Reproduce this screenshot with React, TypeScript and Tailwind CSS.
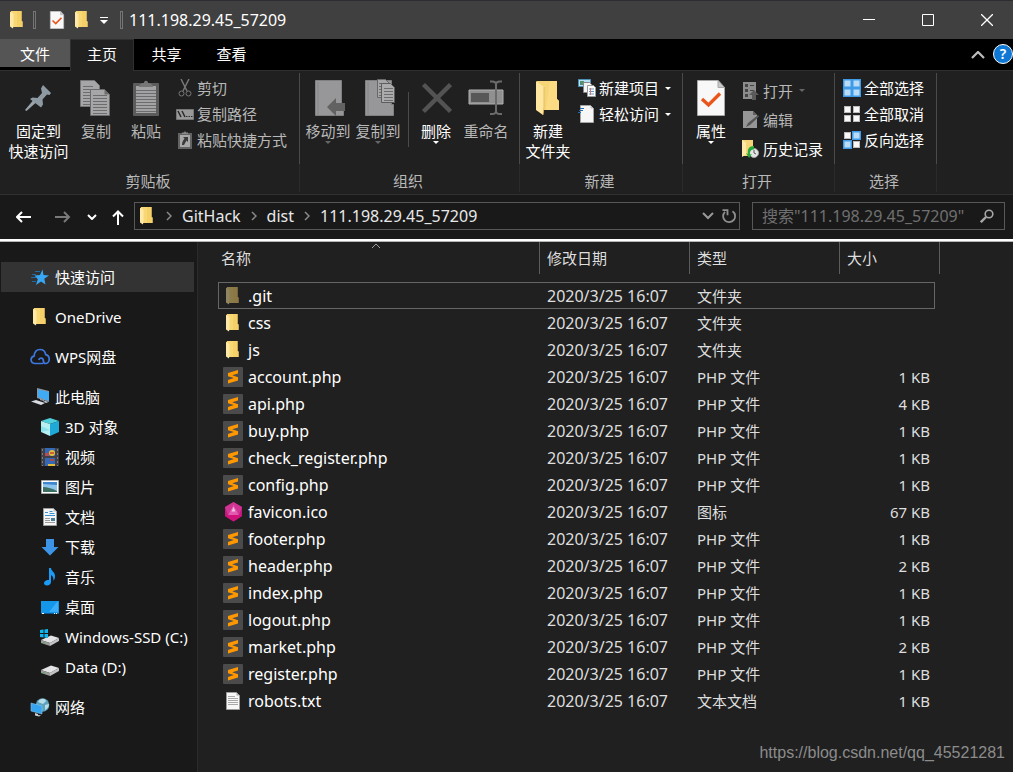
import type { ReactNode } from "react";

type IconProps = { className?: string };

/* ---------- icons ---------- */

function FolderIcon({ className = "" }: IconProps) {
  return (
    <svg width="13" height="18" viewBox="0 0 13 18" className={className}>
      <path d="M1 0h10.500v10l1 .500v5.500H1z" fill="#f8d775" />
      <path d="M7 0h4.500v10l1 .500v5.500H7z" fill="#f5cf68" />
      <path d="M0 .500l3.500 2.500v10.500l-.500 4L0 15.500z" fill="#ffe9a6" />
    </svg>
  );
}

function BigFolderIcon() {
  return (
    <svg width="24" height="36" viewBox="0 0 24 36">
      <path d="M1 1h20v18l2 2v9H1z" fill="#f6d478" />
      <path d="M14 1h7v18l2 2v9H10z" fill="#fbdc82" />
      <path d="M0 1l8 6v20l-1 8-7-5z" fill="#ffe7a0" />
      <path d="M8 7v20l-1 8" fill="none" stroke="#dfb95c" strokeWidth=".8" />
    </svg>
  );
}

function CheckPageIcon({ w = 28, h = 36 }: { w?: number; h?: number }) {
  return (
    <svg width={w} height={h} viewBox="0 0 28 36">
      <path d="M.500 .500h20.500l6.500 7v28H.500z" fill="#f8f8f8" stroke="#a8a8a8" />
      <path d="M21 .500v7h6.500z" fill="#c9c9c9" stroke="#a8a8a8" />
      <path d="M5 19l6.500 6L23 13.500" fill="none" stroke="#e8561c" strokeWidth="3.400" />
    </svg>
  );
}

function PinIcon() {
  return (
    <svg width="27" height="27" viewBox="0 0 27 27">
      <path d="M18 0l8 8-1.500 2-2.500-.500-4.500 5 .5 5-2 3L5 14l2.500-1.500 5 .5L17 8l-1-4.500z" fill="#8e9aa3" />
      <path d="M8 15.500L0 25l1.500 1 9-8z" fill="#98a4ac" />
    </svg>
  );
}

function SheetLines({ x, y, w, n, step = 3 }: { x: number; y: number; w: number; n: number; step?: number }) {
  return (
    <>
      {Array.from({ length: n }, (_, i) => (
        <path key={i} d={`M${x} ${y + i * step + 0.5}h${w}`} stroke="#6c6c6c" />
      ))}
    </>
  );
}

function CopyIcon() {
  return (
    <svg width="32" height="38" viewBox="1 0 32 38">
      <path d="M1.500 1.500h14l5 5v21h-19z" fill="#a6a6a8" stroke="#757575" />
      <SheetLines x={4} y={7} w={10} n={7} />
      <path d="M11.500 10.500h14l5 5v21h-19z" fill="#a6a6a8" stroke="#6a6a6a" />
      <path d="M25.500 10.500v5h5z" fill="#6c6c6c" />
      <SheetLines x={14} y={16} w={14} n={7} />
    </svg>
  );
}

function PasteIcon() {
  return (
    <svg width="26" height="38" viewBox="1 0 26 38">
      <rect x="1" y="4" width="26" height="33" rx="1" fill="#5c5c5c" />
      <path d="M4 7h20v27H4z" fill="#a3a3a5" />
      <path d="M7 8c0-3 3-4 5-4 0-3 4-3 4 0 2 0 5 1 5 4z" fill="#777" />
      <SheetLines x={4} y={11} w={20} n={8} />
    </svg>
  );
}

function CutIcon() {
  return (
    <svg width="18" height="18" viewBox="0 0 18 18" fill="none" stroke="#777">
      <path d="M5 0l6 12M13 0L7 12" strokeWidth="1.500" />
      <circle cx="5.500" cy="14.500" r="2.500" />
      <circle cx="12.500" cy="14.500" r="2.500" />
    </svg>
  );
}

function PathIcon() {
  return (
    <svg width="18" height="18" viewBox="0 0 18 18">
      <path d="M.500 4.500h17v10H.500z" fill="#999" stroke="#777" />
      <path d="M2 6l3 6M6 6l3 6" stroke="#2a2a2a" strokeWidth="1.500" />
      <path d="M10 11.500h1.500m1 0H14m1 0h1.500" stroke="#2a2a2a" />
    </svg>
  );
}

function PasteLinkIcon() {
  return (
    <svg width="18" height="18" viewBox="0 0 18 18">
      <path d="M2 2h14v16H2z" fill="#636363" />
      <path d="M4 4h10v12H4z" fill="#a8a8a8" />
      <path d="M6 3V1.500h2L9 0l1 1.500h2V3z" fill="#8a8a8a" />
      <path d="M7 6h5v5l-1.500-1.500L8 14H6c0-3 1-4.500 2.500-6.500z" fill="#3a3a3a" />
    </svg>
  );
}

function MoveToIcon() {
  return (
    <svg width="34" height="38" viewBox="0 0 34 38">
      <path d="M4.500 1.500h26v24h2v11h-28z" fill="#979799" stroke="#808080" />
      <path d="M7 3v33" stroke="#868688" />
      <path d="M16 28l9-9v5h9v8h-9v5z" fill="#626262" />
    </svg>
  );
}

function CopyToIcon() {
  return (
    <svg width="34" height="38" viewBox="0 0 34 38">
      <path d="M4.500 1.500h26v24h2v11h-28z" fill="#979799" stroke="#808080" />
      <path d="M7 3v33" stroke="#868688" />
      <path d="M16.500.500h8l4 4v14h-12z" fill="#a6a6a8" stroke="#686868" />
      <SheetLines x={18} y={4} w={6} n={5} />
      <path d="M20.500 4.500h9l4 4v15h-13z" fill="#ababad" stroke="#5c5c5c" />
      <SheetLines x={23} y={9} w={9} n={5} />
    </svg>
  );
}

function DeleteIcon() {
  return (
    <svg width="32" height="32" viewBox="0 0 32 32">
      <path d="M3.500 2.500l27 27M30.500 2.500l-27 27" stroke="#535353" strokeWidth="4.500" />
    </svg>
  );
}

function RenameIcon() {
  return (
    <svg width="36" height="36" viewBox="0 0 36 36" fill="none">
      <path d="M1 10h34v14H1z" fill="#909090" stroke="#b0b0b0" />
      <path d="M3 13h18v9H3z" fill="#585858" />
      <path d="M22 1.500h2c2 0 4 1 4 3 0-2 2-3 4-3h2M28 4v27M22 34h2c2 0 4-1 4-3 0 2 2 3 4 3h2" stroke="#6b6b6b" strokeWidth="2" />
    </svg>
  );
}

function NewItemIcon() {
  return (
    <svg width="18" height="18" viewBox="0 0 18 18">
      <path d="M.500.500h12v7H.500z" fill="#b9dff2" stroke="#4c91b5" />
      <path d="M2 2h4v4H2z" fill="#4f9070" />
      <path d="M5.500 3.500h6l2 2v8h-8z" fill="#f4f4f4" stroke="#888" />
      <path d="M9.500 6.500h6l2 2v9h-8z" fill="#fff" stroke="#9a9a9a" />
      <path d="M11 10h5M11 12.500h5M11 15h5" stroke="#5e9ac5" />
      <path d="M12.500 9v7" stroke="#d67878" />
    </svg>
  );
}

function EasyAccessIcon() {
  return (
    <svg width="18" height="18" viewBox="0 0 18 18">
      <path d="M2.500.500h10l3 3v14h-13z" fill="#f7f7f7" stroke="#a5a5a5" />
      <path d="M12.500.500v3h3z" fill="#c5c5c5" />
      <path d="M2 3.500h4M1 5.500h4M0 7.500h3" stroke="#1e6bb5" strokeWidth="1.200" />
    </svg>
  );
}

function OpenIcon() {
  return (
    <svg width="18" height="18" viewBox="0 0 18 18">
      <path d="M1 0h13v17H1z" fill="#8c8c8c" />
      <path d="M3 2h3v3H3zM3 7h3v3H3zM3 12h3v3H3z" fill="#444" />
      <path d="M8 3.500h4M8 8.500h4" stroke="#444" />
      <path d="M12 8l5 5h-3v5h-4v-5H7z" fill="#5a5a5a" />
    </svg>
  );
}

function EditIcon() {
  return (
    <svg width="18" height="18" viewBox="0 0 18 18">
      <path d="M1 0h10l4 4v13H1z" fill="#969696" />
      <path d="M11 0v4h4z" fill="#5f5f5f" />
      <path d="M16 4l1 1.500L8 14l-4 2 2-4z" fill="#555" />
    </svg>
  );
}

function HistoryIcon() {
  return (
    <svg width="18" height="18" viewBox="0 0 18 18">
      <path d="M0 0h11v16H0z" fill="#f6d578" />
      <path d="M0 0l4 2.500v12L0 17z" fill="#ffe9a8" />
      <circle cx="12" cy="13" r="4.500" fill="#e4e4e4" stroke="#a3a3a3" />
      <path d="M12 10v3l2 1" stroke="#555" fill="none" />
      <path d="M12 6c-5 0-7 3-6 8l-2-1 3 5 3-4-2 .500c-.500-3 1-5 4-5z" fill="#26a83b" />
    </svg>
  );
}

/* mode: which of the four tiles are highlighted */
function TilesIcon({ mode }: { mode: "all" | "none" | "invert" }) {
  const tiles = [
    { x: 0, y: 0, on: mode === "all" },
    { x: 9, y: 0, on: mode !== "none" },
    { x: 0, y: 9, on: mode !== "none" },
    { x: 9, y: 9, on: mode === "all" },
  ];
  return (
    <svg width="18" height="18" viewBox="0 0 18 18">
      {tiles.map((t) =>
        t.on ? (
          <rect key={`${t.x}${t.y}`} x={t.x + 0.75} y={t.y + 0.75} width="7.500" height="7.500" fill="#b8dcf8" stroke="#3f9be8" strokeWidth="1.500" />
        ) : (
          <rect key={`${t.x}${t.y}`} x={t.x + 1.5} y={t.y + 1.5} width="6" height="6" fill="#f8f8f8" stroke="#bbb" />
        )
      )}
    </svg>
  );
}

function Caret({ className = "" }: IconProps) {
  return (
    <svg width="6" height="3" viewBox="0 0 6 3" className={className}>
      <path d="M0 0h6L3 3z" fill="currentColor" />
    </svg>
  );
}

function Chevron({ className = "" }: IconProps) {
  return (
    <svg width="6" height="10" viewBox="0 0 6 10" fill="none" className={className}>
      <path d="M1 1l4 4-4 4" stroke="#8a8a8a" strokeWidth="1.500" />
    </svg>
  );
}

function StarIcon() {
  return (
    <svg width="20" height="20" viewBox="0 0 20 20">
      <path d="M12.500 2.500l1 5.500 5.500.500-4.700 3.200 1.200 5.800-4.500-3-5 3.500 1.800-5.800L4.500 8.500 10 8z" fill="#38a8f5" />
      <path d="M5 4.500h5M2 7.500h4M1 10.500h5M2 14.500h4" stroke="#1f6ba5" />
    </svg>
  );
}

function CloudIcon() {
  return (
    <svg width="20" height="20" viewBox="0 0 20 20" fill="none" stroke="#3c78e0" strokeWidth="1.700">
      <path d="M13 16.500H4.500a3.700 3.700 0 0 1-.5-7.300C4.500 5 7 2.500 10 2.500c2.800 0 5.200 2 5.700 5.200 2.200.500 3.500 2.300 3.500 4.500 0 2.300-1.700 4.300-3.700 4.300-1.500 0-2-.800-2-2 0-2-.8-3.300-2.500-3.300-1.200 0-2 .7-2.200 1.800" />
    </svg>
  );
}

function ComputerIcon() {
  return (
    <svg width="20" height="20" viewBox="0 0 20 20">
      <path d="M7 1l12 3v11L7 11z" fill="#8a97a3" />
      <path d="M8 2.500l11 2.500v9L8 10z" fill="#40aaf4" />
      <path d="M10 12l4 1v1l-4-1z" fill="#a7adb3" />
      <path d="M1 14.500l5-1.500 9 3-4 2z" fill="#d8dce0" />
      <path d="M13 14.500l2.500-.500 3 1-2.500 1z" fill="#c3c8cc" />
    </svg>
  );
}

function CubeIcon() {
  return (
    <svg width="20" height="20" viewBox="0 0 20 20">
      <path d="M1 4l9-3 9 3-9 3z" fill="#4fd0dc" />
      <path d="M1 4l9 3v12l-9-4z" fill="#b7eef2" />
      <path d="M19 4l-9 3v12l9-4z" fill="#1fa9d8" />
      <path d="M10 13l-9 2V9z" fill="#8ae2ea" />
    </svg>
  );
}

function VideoIcon() {
  return (
    <svg width="20" height="20" viewBox="0 0 20 20">
      <path d="M1 1h18v18H1z" fill="#3f3f45" />
      <path d="M5 1h10v8H5zM5 11h10v8H5z" fill="#3569b5" />
      <path d="M5 6h4v3H5z" fill="#b34c5a" />
      <circle cx="12" cy="6" r="3" fill="#e7bf3a" />
      <path d="M10 6h4M10 13h4" stroke="#c8422e" strokeWidth="1.500" />
      <path d="M8 17h7v2H8z" fill="#e4b83b" />
      <path d="M2.500 2v17M17.500 2v17" stroke="#7d7d7d" strokeDasharray="2 2" />
    </svg>
  );
}

function PictureIcon() {
  return (
    <svg width="20" height="20" viewBox="0 0 20 20">
      <path d="M1.500 3.500h17v13h-17z" fill="#fff" stroke="#a8a8a8" />
      <path d="M3 5h14v10H3z" fill="#8ec5ee" />
      <path d="M3 5h14v3L3 7z" fill="#3f86cf" />
      <path d="M3 10c4 0 8 1 14 4v1H3z" fill="#3d6f63" />
    </svg>
  );
}

function DocIcon() {
  return (
    <svg width="20" height="20" viewBox="0 0 20 20">
      <path d="M3.500 1.500h10l3 3v14h-13z" fill="#f5f5f5" stroke="#9d9d9d" />
      <path d="M13.500 1.500v3h3z" fill="#bcbcbc" />
      <path d="M5 5.500h3M9.500 4.500h3M9.500 6.500h5M5 8.500h10" stroke="#3391d4" />
      <path d="M5 11.500h5M5 13.500h5M5 15.500h10" stroke="#9a9a9a" />
      <path d="M11 11h4v3h-4z" fill="#4a7f9a" />
    </svg>
  );
}

function DownloadIcon() {
  return (
    <svg width="20" height="20" viewBox="0 0 20 20">
      <path d="M6 2h8v8h4.500L10 18.500 1.500 10H6z" fill="#3d94e6" />
    </svg>
  );
}

function MusicIcon() {
  return (
    <svg width="20" height="20" viewBox="0 0 20 20">
      <path d="M9 1h2c0 3 4 4 4 8 0 2-.500 3.500-1.500 5 0-3-.500-5-2.500-6v7c0 2-2 3.500-4 3.500S4 17.500 4 16c0-2 2.500-3.500 5-3z" fill="#1a9bf5" />
    </svg>
  );
}

function DesktopIcon() {
  return (
    <svg width="20" height="20" viewBox="0 0 20 20">
      <path d="M1 4h18v13H1z" fill="#1496ea" />
      <path d="M9 15L17 5h1v10z" fill="#3aaefa" />
      <path d="M1 16h18v1H1z" fill="#0e5a94" />
      <path d="M2 16.500h2M14 16.500h1M16 16.500h1" stroke="#fff" />
    </svg>
  );
}

function DriveIcon({ win = false }: { win?: boolean }) {
  return (
    <svg width="20" height="20" viewBox="0 0 20 20">
      <path d="M1 13l10-4.500 8 2.500-9 5z" fill="#e4e4e6" />
      <path d="M1 13l9 3v3l-9-3z" fill="#9a9a9c" />
      <path d="M10 16l9-5v3l-9 5z" fill="#c4c4c6" />
      <path d="M3 15.500l2 .700" stroke="#3dbb4a" />
      {win && <path d="M0 3l3.500-.500V6H0zM4.500 2.400L8 2v4H4.500zM0 7h3.500v3.500L0 10zM4.500 7H8v4l-3.500-.500z" fill="#12b6ee" />}
    </svg>
  );
}

function NetworkIcon() {
  return (
    <svg width="20" height="20" viewBox="0 0 20 20">
      <circle cx="12.500" cy="8" r="6.800" fill="#5da3bd" />
      <path d="M8 5c2-4 7-4 8-1l-3 3zM15 8l4-1c0 3-2 5-4 6z" fill="#b9dde8" />
      <path d="M1 6l11 3v8L1 14z" fill="#37a4f0" stroke="#7fc4ef" strokeWidth=".600" />
      <path d="M5 16l3 1v1l3 .500-2 1-4-1z" fill="#c8ced2" />
    </svg>
  );
}

function SublimeIcon() {
  return (
    <svg width="20" height="20" viewBox="0 0 20 20">
      <rect width="20" height="20" rx="1" fill="#4b4b4b" />
      <path d="M15 3v3.600L9.200 8.300 15 10.300v3.200L5 16.500v-3.600l5.800-1.800L5 9.300V6z" fill="#ff9800" />
    </svg>
  );
}

function FaviconIcon() {
  return (
    <svg width="20" height="20" viewBox="0 0 20 20">
      <path d="M10.500 0l8.500 5v9l-8.500 5.500L2 14V5z" fill="#c2187f" />
      <path d="M10.500 2.500l5.500 10.500H5z" fill="#e35bb0" />
      <path d="M10.500 5l2 4.500h-4z" fill="#f6c4e2" />
      <path d="M10.500 0L2 5l3 8 5.500-10.500L16 13l3-8z" fill="#d6429b" fillOpacity=".700" />
      <path d="M2 14l3-1h11l3 1-8.500 5.500z" fill="#d0127c" />
    </svg>
  );
}

function TextFileIcon() {
  return (
    <svg width="20" height="20" viewBox="0 0 20 20">
      <path d="M3.500 1.500h10l3 3v14h-13z" fill="#f7f7f7" stroke="#9c9c9c" />
      <path d="M13.500 1.500v3h3z" fill="#aaa" />
      <path d="M5 5.500h7M5 7.500h10M5 9.500h10M5 11.500h10M5 13.500h10" stroke="#a8a8a8" />
    </svg>
  );
}

/* ---------- ribbon ---------- */

type LargeButtonProps = {
  icon: ReactNode;
  lines: string[];
  disabled?: boolean;
  menu?: boolean;
  className?: string;
};

function LargeButton({ icon, lines, disabled = false, menu = false, className = "w-[50px]" }: LargeButtonProps) {
  return (
    <button
      disabled={disabled}
      className={`flex shrink-0 flex-col items-center pt-1 leading-5 whitespace-nowrap ${disabled ? "text-[#b8b8b8]" : "text-white"} ${className}`}
    >
      <span className="mb-1 flex h-[38px] items-center">{icon}</span>
      {lines.map((line) => (
        <span key={line}>{line}</span>
      ))}
      {menu && <Caret className={disabled ? "text-[#666]" : "text-white"} />}
    </button>
  );
}

type SmallButtonProps = {
  icon: ReactNode;
  label: string;
  disabled?: boolean;
  menu?: boolean;
  tall?: boolean;
};

function SmallButton({ icon, label, disabled = false, menu = false, tall = false }: SmallButtonProps) {
  return (
    <button
      disabled={disabled}
      className={`flex items-center gap-[3px] whitespace-nowrap ${tall ? "h-[29px]" : "h-[26px]"} ${disabled ? "text-[#b8b8b8]" : "text-white"}`}
    >
      {icon}
      <span>{label}</span>
      {menu && <Caret className={disabled ? "ml-[3px] text-[#666]" : "ml-[3px] text-white"} />}
    </button>
  );
}

function RibbonGroup({ title, className, children }: { title: string; className: string; children: ReactNode }) {
  return (
    <>
      <section className={`flex shrink-0 flex-col pt-1 ${className}`}>
        <div className="flex h-24 items-start">{children}</div>
        <h2 className="pr-[3px] text-center leading-5 text-[#b8b8b8]">{title}</h2>
      </section>
      <div className="my-[2px] flex w-px shrink-0 flex-col">
        <div className="h-[91px] bg-[#4a4a4a]" />
        <div className="flex-1 bg-[#2b2b2b]" />
      </div>
    </>
  );
}

function Ribbon() {
  return (
    <div className="flex h-[125px] overflow-hidden border-y border-[#303030] bg-[#202020]">
      <RibbonGroup title="剪贴板" className="w-[299px]">
        <LargeButton icon={<PinIcon />} lines={["固定到", "快速访问"]} className="ml-[6px] w-[65px]" />
        <LargeButton icon={<CopyIcon />} lines={["复制"]} disabled />
        <LargeButton icon={<PasteIcon />} lines={["粘贴"]} disabled />
        <div className="ml-[5px]">
          <SmallButton icon={<CutIcon />} label="剪切" disabled />
          <SmallButton icon={<PathIcon />} label="复制路径" disabled />
          <SmallButton icon={<PasteLinkIcon />} label="粘贴快捷方式" disabled />
        </div>
      </RibbonGroup>
      <RibbonGroup title="组织" className="w-[219px]">
        <LargeButton icon={<MoveToIcon />} lines={["移动到"]} disabled menu className="ml-[3px] w-[50px]" />
        <LargeButton icon={<CopyToIcon />} lines={["复制到"]} disabled menu />
        <div className="mt-[17px] mr-[2px] ml-[5px] h-[55px] w-px bg-[#4a4a4a]" />
        <LargeButton icon={<DeleteIcon />} lines={["删除"]} menu />
        <LargeButton icon={<RenameIcon />} lines={["重命名"]} disabled />
      </RibbonGroup>
      <RibbonGroup title="新建" className="w-[162px]">
        <LargeButton icon={<BigFolderIcon />} lines={["新建", "文件夹"]} className="ml-[3px] w-[50px]" />
        <div className="ml-[5px]">
          <SmallButton icon={<NewItemIcon />} label="新建项目" menu />
          <SmallButton icon={<EasyAccessIcon />} label="轻松访问" menu />
        </div>
      </RibbonGroup>
      <RibbonGroup title="打开" className="w-[151px]">
        <LargeButton icon={<CheckPageIcon />} lines={["属性"]} menu className="ml-[3px] w-[50px]" />
        <div className="ml-[6px] pt-px">
          <SmallButton icon={<OpenIcon />} label="打开" disabled menu tall />
          <SmallButton icon={<EditIcon />} label="编辑" disabled tall />
          <SmallButton icon={<HistoryIcon />} label="历史记录" tall />
        </div>
      </RibbonGroup>
      <RibbonGroup title="选择" className="w-[101px]">
        <div className="ml-2">
          <SmallButton icon={<TilesIcon mode="all" />} label="全部选择" />
          <SmallButton icon={<TilesIcon mode="none" />} label="全部取消" />
          <SmallButton icon={<TilesIcon mode="invert" />} label="反向选择" />
        </div>
      </RibbonGroup>
    </div>
  );
}

/* ---------- window chrome ---------- */

function TitleBar() {
  return (
    <header className="flex h-[39px] items-center border-t border-[#2b2d30] bg-[#404040] pl-[10px]">
      <FolderIcon />
      <span className="ml-[10px] h-[18px] w-[3px] border border-[#757575]" />
      <button aria-label="属性" className="ml-[13px]">
        <CheckPageIcon w={16} h={18} />
      </button>
      <button aria-label="新建文件夹" className="ml-[10px]">
        <FolderIcon />
      </button>
      <button aria-label="自定义快速访问工具栏" className="ml-3">
        <svg width="8" height="8" viewBox="0 0 8 8">
          <path d="M0 1.500h8" stroke="#fff" />
          <path d="M0 4h8L4 8z" fill="#fff" />
        </svg>
      </button>
      <span className="ml-3 h-[18px] w-[3px] border border-[#757575]" />
      <h1 className="ml-[6px] flex-1 text-base text-white">111.198.29.45_57209</h1>
      <div className="flex gap-[47px] pr-5 text-white">
        <button aria-label="最小化">
          <svg width="12" height="12" viewBox="0 0 12 12" stroke="currentColor">
            <path d="M0 5.500h12" />
          </svg>
        </button>
        <button aria-label="最大化">
          <svg width="12" height="12" viewBox="0 0 12 12" fill="none" stroke="currentColor">
            <path d="M.500.500h11v11H.500z" />
          </svg>
        </button>
        <button aria-label="关闭">
          <svg width="12" height="12" viewBox="0 0 12 12" stroke="currentColor" strokeWidth="1.300">
            <path d="M0 0l12 12M12 0L0 12" />
          </svg>
        </button>
      </div>
    </header>
  );
}

function TabStrip() {
  return (
    <nav className="flex h-[31px] bg-black text-white">
      <button className="h-7 w-[70px] bg-[#555] pt-px">文件</button>
      <button className="relative z-10 h-8 w-16 border border-b-0 border-[#303030] bg-[#202020] pb-[3px]">主页</button>
      <button className="w-[65px] pb-px">共享</button>
      <button className="w-[65px] pb-px">查看</button>
      <button aria-label="折叠功能区" className="mr-2 ml-auto">
        <svg width="14" height="8" viewBox="0 0 14 8" fill="none">
          <path d="M1 7l6-6 6 6" stroke="#bdbdbd" strokeWidth="2.200" />
        </svg>
      </button>
      <button
        aria-label="帮助"
        className="mb-px h-5 w-5 self-center rounded-full border border-white bg-[#0f78d4] text-sm leading-none font-semibold"
      >
        ?
      </button>
    </nav>
  );
}

function AddressBar() {
  return (
    <div className="flex h-11 items-center bg-[#191919] pr-2 pl-4">
      <button aria-label="后退">
        <svg width="16" height="12" viewBox="0 0 16 12" fill="none" stroke="#fff" strokeWidth="2">
          <path d="M15 6H1M6 1L1 6l5 5" />
        </svg>
      </button>
      <button aria-label="前进" className="ml-[23px]">
        <svg width="16" height="12" viewBox="0 0 16 12" fill="none" stroke="#7a7a7a" strokeWidth="2">
          <path d="M0 6h14M9 1l5 5-5 5" />
        </svg>
      </button>
      <button aria-label="最近浏览的位置" className="ml-4">
        <svg width="10" height="6" viewBox="0 0 10 6" fill="none" stroke="#fff" strokeWidth="2">
          <path d="M1 1l4 4 4-4" />
        </svg>
      </button>
      <button aria-label="上移" className="mr-[10px] ml-[15px]">
        <svg width="12" height="15" viewBox="0 0 12 15" fill="none" stroke="#fff" strokeWidth="2">
          <path d="M6 15V1.500M1 6.500l5-5 5 5" />
        </svg>
      </button>

      <div className="mb-[2px] flex h-7 flex-1 items-center border border-[#585858] pl-[5px] text-base text-[#e8e8e8]">
        <FolderIcon />
        <Chevron className="mr-[10px] ml-[13px]" />
        <a href="#GitHack">GitHack</a>
        <Chevron className="mx-[10px]" />
        <a href="#dist">dist</a>
        <Chevron className="mx-[10px]" />
        <a href="#current">111.198.29.45_57209</a>
        <button aria-label="历史位置" className="ml-auto">
          <svg width="12" height="8" viewBox="0 0 12 8" fill="none" stroke="#999" strokeWidth="2">
            <path d="M1 1l5 5 5-5" />
          </svg>
        </button>
        <button aria-label="刷新" className="mr-[2px] ml-[7px]">
          <svg width="16" height="16" viewBox="0 0 16 16" fill="none" stroke="#8f8f8f" strokeWidth="1.800">
            <path d="M11.500 3.200A6 6 0 1 1 4 3.800" />
            <path d="M1.500 2.200h5v5" />
          </svg>
        </button>
      </div>

      <label className="mb-[2px] ml-3 flex h-7 w-[253px] items-center border border-[#585858] pr-[10px] pl-[9px]">
        <input
          aria-label="搜索"
          placeholder={'搜索"111.198.29.45_57209"'}
          className="min-w-0 flex-1 bg-transparent text-base text-white outline-none placeholder:text-[#707070]"
        />
        <svg width="14" height="14" viewBox="0 0 14 14" fill="none" stroke="#a8a8a8">
          <circle cx="9" cy="5" r="3.800" strokeWidth="1.600" />
          <path d="M6 8L.800 13.200" strokeWidth="2.400" />
        </svg>
      </label>
    </div>
  );
}

/* ---------- navigation pane ---------- */

const navGroups: { label: string; icon: ReactNode; active?: boolean; children?: { label: string; icon: ReactNode }[] }[] = [
  { label: "快速访问", icon: <StarIcon />, active: true },
  { label: "OneDrive", icon: <FolderIcon className="mx-[3px]" /> },
  { label: "WPS网盘", icon: <CloudIcon /> },
  {
    label: "此电脑",
    icon: <ComputerIcon />,
    children: [
      { label: "3D 对象", icon: <CubeIcon /> },
      { label: "视频", icon: <VideoIcon /> },
      { label: "图片", icon: <PictureIcon /> },
      { label: "文档", icon: <DocIcon /> },
      { label: "下载", icon: <DownloadIcon /> },
      { label: "音乐", icon: <MusicIcon /> },
      { label: "桌面", icon: <DesktopIcon /> },
      { label: "Windows-SSD (C:)", icon: <DriveIcon win /> },
      { label: "Data (D:)", icon: <DriveIcon /> },
    ],
  },
  { label: "网络", icon: <NetworkIcon /> },
];

function Sidebar() {
  return (
    <aside className="w-[198px] shrink-0 border-r border-[#2b2b2b] bg-[#191919] pt-5 text-white">
      <ul className="flex flex-col gap-[10px]">
        {navGroups.map((g) => (
          <li key={g.label}>
            <a
              href={`#${g.label}`}
              className={`mr-[3px] ml-px flex h-[30px] items-center gap-[5px] pl-[29px] whitespace-nowrap ${g.active ? "bg-[#333]" : ""}`}
            >
              <span className="flex w-5 shrink-0">{g.icon}</span>
              {g.label}
            </a>
            {g.children && (
              <ul>
                {g.children.map((c) => (
                  <li key={c.label}>
                    <a href={`#${c.label}`} className="flex h-[30px] items-center gap-[5px] pl-10 whitespace-nowrap">
                      {c.icon}
                      {c.label}
                    </a>
                  </li>
                ))}
              </ul>
            )}
          </li>
        ))}
      </ul>
    </aside>
  );
}

/* ---------- file list ---------- */

type FileKind = "folder" | "php" | "ico" | "txt";

const files: { name: string; kind: FileKind; size?: string; hidden?: boolean }[] = [
  { name: ".git", kind: "folder", hidden: true },
  { name: "css", kind: "folder" },
  { name: "js", kind: "folder" },
  { name: "account.php", kind: "php", size: "1 KB" },
  { name: "api.php", kind: "php", size: "4 KB" },
  { name: "buy.php", kind: "php", size: "1 KB" },
  { name: "check_register.php", kind: "php", size: "1 KB" },
  { name: "config.php", kind: "php", size: "1 KB" },
  { name: "favicon.ico", kind: "ico", size: "67 KB" },
  { name: "footer.php", kind: "php", size: "1 KB" },
  { name: "header.php", kind: "php", size: "2 KB" },
  { name: "index.php", kind: "php", size: "1 KB" },
  { name: "logout.php", kind: "php", size: "1 KB" },
  { name: "market.php", kind: "php", size: "2 KB" },
  { name: "register.php", kind: "php", size: "1 KB" },
  { name: "robots.txt", kind: "txt", size: "1 KB" },
];

const kindLabels: Record<FileKind, string> = {
  folder: "文件夹",
  php: "PHP 文件",
  ico: "图标",
  txt: "文本文档",
};

function FileIcon({ kind, hidden }: { kind: FileKind; hidden?: boolean }) {
  if (kind === "php") return <SublimeIcon />;
  if (kind === "ico") return <FaviconIcon />;
  if (kind === "txt") return <TextFileIcon />;
  return <FolderIcon className={hidden ? "mr-1 ml-[3px] opacity-50" : "mr-1 ml-[3px]"} />;
}

function FileTable() {
  const heads = ["修改日期", "类型", "大小"];
  return (
    <table className="ml-5 w-[722px] table-fixed border-separate border-spacing-0 text-[#dedede]">
      <colgroup>
        <col />
        <col className="w-[150px]" />
        <col className="w-[150px]" />
        <col className="w-[96px]" />
        <col className="w-[5px]" />
      </colgroup>
      <thead>
        <tr>
          <th className="relative h-10 p-0 text-left align-top font-normal">
            <svg width="10" height="6" viewBox="0 0 10 6" fill="none" className="absolute top-px left-[153px]">
              <path d="M1 5l4-4 4 4" stroke="#a0a0a0" />
            </svg>
            <div className="h-8 pl-[3px] leading-8">名称</div>
          </th>
          {heads.map((h, i) => (
            <th key={h} colSpan={i === 2 ? 2 : 1} className="h-10 p-0 text-left align-top font-normal">
              <div className={`h-8 border-l border-[#5c5c5c] pl-[7px] leading-8 ${i === 2 ? "border-r" : ""}`}>{h}</div>
            </th>
          ))}
        </tr>
      </thead>
      <tbody>
        {files.map((f, i) => {
          const line = i === 0 ? "h-[27px] border-y border-[#666]" : "h-[27px]";
          return (
            <tr key={f.name}>
              <td className={`p-0 ${line} ${i === 0 ? "border-l pl-1" : "pl-[5px]"}`}>
                <div className="flex items-center gap-[5px] text-base text-white">
                  <FileIcon kind={f.kind} hidden={f.hidden} />
                  {f.name}
                </div>
              </td>
              <td className={`p-0 pl-2 text-base whitespace-nowrap ${line}`}>2020/3/25 16:07</td>
              <td className={`p-0 pl-2 whitespace-nowrap ${line}`}>{kindLabels[f.kind]}</td>
              <td className={`p-0 pr-[5px] text-right whitespace-nowrap ${line} ${i === 0 ? "border-r" : ""}`}>{f.size}</td>
              <td className="p-0" />
            </tr>
          );
        })}
      </tbody>
    </table>
  );
}

export default function App() {
  return (
    <div className="relative flex min-h-screen flex-col overflow-hidden bg-[#202020] font-['Noto_Sans','Noto_Sans_CJK_SC',sans-serif] text-[15px]/6">
      <TitleBar />
      <TabStrip />
      <Ribbon />
      <AddressBar />
      <div className="h-[3px] border-b border-[#b5b5b5] bg-white" />
      <div className="flex flex-1">
        <Sidebar />
        <main className="min-w-0 flex-1">
          <FileTable />
        </main>
      </div>
      <p className="absolute right-2 bottom-[7px] font-['Liberation_Sans',sans-serif] text-base text-[#8c8c8c]">
        https://blog.csdn.net/qq_45521281
      </p>
    </div>
  );
}
